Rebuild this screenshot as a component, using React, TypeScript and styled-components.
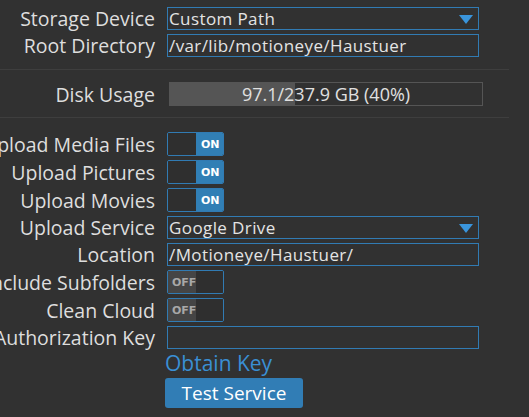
import React from 'react';
import styled, { createGlobalStyle } from 'styled-components';

const GlobalStyle = createGlobalStyle`
  html, body {
    margin: 0;
    padding: 0;
    background: #313131;
    overflow: hidden;
  }
  body {
    font-family: "Open Sans", "Noto Sans", "DejaVu Sans", sans-serif;
    color: #e0e0e0;
  }
`;

const Page = styled.div`
  width: 529px;
  height: 417px;
  padding-top: 7px;
  box-sizing: border-box;
`;

const Section = styled.div`
  display: flex;
  flex-direction: column;
  gap: 4px;
`;

const Separator = styled.div<{ $top: number; $bottom: number }>`
  width: 509px;
  height: 1px;
  background: #3e3e3e;
  margin: ${(p) => `${p.$top}px 0 ${p.$bottom}px`};
`;

const Row = styled.div`
  display: flex;
  align-items: center;
  gap: 12px;
`;

const Label = styled.div`
  width: 155px;
  flex: none;
  display: flex;
  justify-content: flex-end;
  white-space: nowrap;
  font-size: 19.5px;
  line-height: 23px;
  color: #dedede;
`;

const Field = styled.div`
  width: 312px;
  height: 23px;
  box-sizing: border-box;
  border: 1px solid #317bb3;
  display: flex;
  align-items: center;
  justify-content: space-between;
  padding: 0 5px 0 1px;
  font-size: 17px;
  letter-spacing: 0.4px;
  color: #e4e4e4;
  white-space: nowrap;
`;

const Arrow = styled.div`
  width: 0;
  height: 0;
  border-left: 7px solid transparent;
  border-right: 7px solid transparent;
  border-top: 9px solid #3a95dc;
  margin-top: 2px;
`;

const Bar = styled.div`
  position: relative;
  width: 314px;
  height: 24px;
  box-sizing: border-box;
  border: 1px solid #555;
  margin-left: 2px;
  display: flex;
  align-items: center;
  justify-content: center;
  font-size: 18px;
  color: #e0e0e0;
`;

const BarFill = styled.div`
  position: absolute;
  left: 0;
  top: 0;
  bottom: 0;
  background: #555;
`;

const BarText = styled.span`
  position: relative;
`;

const Toggle = styled.div<{ $on: boolean }>`
  width: 57px;
  height: 24px;
  box-sizing: border-box;
  border: 1px solid #317bb3;
  border-radius: 2px;
  display: flex;
  overflow: hidden;
  flex-direction: ${(p) => (p.$on ? 'row' : 'row-reverse')};
`;

const Knob = styled.div`
  width: 28px;
  background: #2f2f2f;
`;

const ToggleText = styled.div<{ $on: boolean }>`
  flex: 1;
  display: flex;
  align-items: center;
  padding-left: ${(p) => (p.$on ? 5 : 4)}px;
  font-family: "DejaVu Sans", sans-serif;
  font-size: 11px;
  font-weight: bold;
  background: ${(p) => (p.$on ? '#317fb5' : '#454545')};
  color: ${(p) => (p.$on ? '#fff' : '#a8a8a8')};
`;

const Link = styled.div`
  margin-left: 165px;
  margin-top: 1px;
  font-size: 21px;
  color: #3a8fd4;
  line-height: 26px;
`;

const Button = styled.button`
  display: block;
  margin-left: 165px;
  margin-top: 2px;
  width: 138px;
  height: 30px;
  border: none;
  border-radius: 3px;
  background: #317db5;
  color: #fff;
  font-family: inherit;
  font-size: 19px;
  padding: 0;
`;

function Switch({ on }: { on: boolean }): JSX.Element {
  return (
    <Toggle $on={on}>
      <Knob />
      <ToggleText $on={on}>{on ? 'ON' : 'OFF'}</ToggleText>
    </Toggle>
  );
}

export default function App(): JSX.Element {
  return (
    <Page>
      <GlobalStyle />
      <Section>
        <Row>
          <Label>Storage Device</Label>
          <Field>
            Custom Path
            <Arrow />
          </Field>
        </Row>
        <Row>
          <Label>Root Directory</Label>
          <Field>/var/lib/motioneye/Haustuer</Field>
        </Row>
      </Section>
      <Separator $top={12} $bottom={12} />
      <Section>
        <Row>
          <Label>Disk Usage</Label>
          <Bar>
            <BarFill style={{ width: '40%' }} />
            <BarText>97.1/237.9 GB (40%)</BarText>
          </Bar>
        </Row>
      </Section>
      <Separator $top={11} $bottom={14} />
      <Section>
        <Row>
          <Label>Upload Media Files</Label>
          <Switch on />
        </Row>
        <Row>
          <Label>Upload Pictures</Label>
          <Switch on />
        </Row>
        <Row>
          <Label>Upload Movies</Label>
          <Switch on />
        </Row>
        <Row>
          <Label>Upload Service</Label>
          <Field>
            Google Drive
            <Arrow />
          </Field>
        </Row>
        <Row>
          <Label>Location</Label>
          <Field>/Motioneye/Haustuer/</Field>
        </Row>
        <Row>
          <Label>Include Subfolders</Label>
          <Switch on={false} />
        </Row>
        <Row>
          <Label>Clean Cloud</Label>
          <Switch on={false} />
        </Row>
        <Row>
          <Label>Authorization Key</Label>
          <Field />
        </Row>
      </Section>
      <Link>Obtain Key</Link>
      <Button>Test Service</Button>
    </Page>
  );
}
